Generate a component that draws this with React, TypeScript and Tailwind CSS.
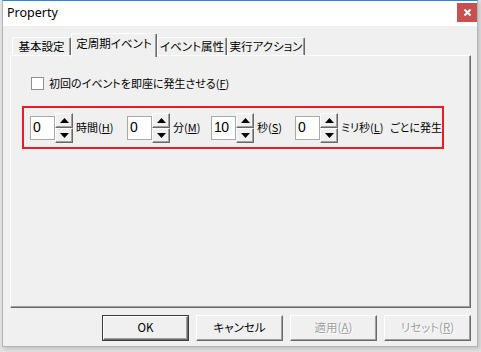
const jp = "font-['Noto_Sans_CJK_JP',sans-serif] [font-feature-settings:'palt']"

function Tri({ up }: { up?: boolean }) {
  return (
    <svg width="9" height="5" viewBox="0 0 9 5">
      <path d={up ? 'M4.5 0L9 5H0Z' : 'M0 0H9L4.5 5Z'} fill="#000" />
    </svg>
  )
}

function SpinBtn({ up }: { up?: boolean }) {
  return (
    <div className="h-[15px] w-[18px] flex items-center justify-center bg-[#f0f0f0] border border-t-white border-l-white border-r-[#696969] border-b-[#696969] shadow-[inset_-1px_-1px_0_#a0a0a0]">
      <Tri up={up} />
    </div>
  )
}

function Spin({ value }: { value: string }) {
  return (
    <div className="flex items-center shrink-0">
      <div className="w-[25px] h-[24px] bg-white border border-[#a9a9a9] pl-[2px] text-[14px] leading-[20px] tracking-[-0.5px] font-['Liberation_Sans',sans-serif] text-black">
        {value}
      </div>
      <div className="flex flex-col w-[18px] h-[30px]">
        <SpinBtn up />
        <SpinBtn />
      </div>
    </div>
  )
}

function Tab({ label, w, active }: { label: string; w: string; active?: boolean }) {
  return (
    <div
      className={
        active
          ? `${w} shrink-0 relative z-10 h-[24px] -mb-[2px] pb-[4px] flex items-center justify-center bg-[#f0f0f0] border-t border-l border-r border-t-white border-l-white border-r-[#696969] shadow-[inset_-1px_0_0_#a0a0a0] rounded-t-[2px]`
          : `${w} shrink-0 h-[18px] flex items-center justify-center bg-[#f0f0f0] border-t border-l border-r border-t-white border-l-white border-r-[#696969] shadow-[inset_-1px_0_0_#a0a0a0] rounded-t-[2px]`
      }
    >
      <span className="text-[11.5px] leading-none text-black whitespace-nowrap">{label}</span>
    </div>
  )
}

function Btn({ children, def, disabled }: { children: React.ReactNode; def?: boolean; disabled?: boolean }) {
  return (
    <div
      className={
        def
          ? 'w-[87px] h-[26px] border border-[#3c3c3c] flex'
          : 'w-[87px] h-[26px] flex'
      }
    >
      <div
        className={
          'flex-1 flex items-center justify-center whitespace-nowrap bg-[#f0f0f0] border border-t-white border-l-white border-r-[#696969] border-b-[#696969] shadow-[inset_-1px_-1px_0_#a0a0a0] text-[11.5px] ' +
          (disabled ? 'text-[#a0a0a0] [text-shadow:1px_1px_0_#fff]' : 'text-black')
        }
      >
        {children}
      </div>
    </div>
  )
}

export default function App() {
  return (
    <div className={`w-[481px] h-[352px] bg-[#e2e2e2] pl-[2px] ${jp}`}>
      <div className="w-[476px] h-[347px] flex flex-col border-t border-t-[#2b86d6] border-x border-b border-x-[#b4b4b4] border-b-[#b4b4b4] shadow-[2px_2px_4px_rgba(0,0,0,0.15)]">
        <div className="h-[25px] bg-white flex items-start justify-between">
          <span className="pl-[4px] pt-[5px] text-[12.5px] leading-[14px] text-black font-['Noto_Sans',sans-serif]">
            Property
          </span>
          <div className="mt-[2px] w-[20px] h-[19px] bg-[#c75050] flex items-center justify-center">
            <svg width="7" height="7" viewBox="0 0 7 7">
              <path d="M0.5 0.5L6.5 6.5M6.5 0.5L0.5 6.5" stroke="#fff" strokeWidth="2" />
            </svg>
          </div>
        </div>
        <div className="flex-1 bg-[#f0f0f0] pt-[7px] pl-[7px] flex flex-col">
          <div className="h-[22px] flex items-end pl-[2px]">
            <Tab label="基本設定" w="w-[59px]" />
            <Tab label="定周期イベント" w="w-[86px]" active />
            <Tab label="イベント属性" w="w-[70px]" />
            <Tab label="実行アクション" w="w-[78px]" />
          </div>
          <div className="w-[461px] h-[253px] bg-[#f0f0f0] border border-t-white border-l-white border-r-[#696969] border-b-[#696969] shadow-[inset_-1px_-1px_0_#a0a0a0] pl-[11px] pt-[19px] flex flex-col">
            <div className="h-[16px] flex items-center pl-[9px]">
              <div className="w-[13px] h-[13px] bg-white border border-[#8f8f8f]" />
              <span className="ml-[5px] text-[11px] text-black leading-none whitespace-nowrap">
                初回のイベントを即座に発生させる(<span className="underline">F</span>)
              </span>
            </div>
            <div className="mt-[15px] w-[422px] h-[43px] border-2 border-[#ec1c24] flex items-center pl-[6px] text-[11px] text-black whitespace-nowrap">
              <Spin value="0" />
              <span className="ml-[3px] w-[51px] shrink-0">
                時間(<span className="underline">H</span>)
              </span>
              <Spin value="0" />
              <span className="ml-[3px] w-[38px] shrink-0">
                分(<span className="underline">M</span>)
              </span>
              <Spin value="10" />
              <span className="ml-[3px] w-[38px] shrink-0">
                秒(<span className="underline">S</span>)
              </span>
              <Spin value="0" />
              <span className="ml-[3px] w-[49px] shrink-0">
                ミリ秒(<span className="underline">L</span>)
              </span>
              <span className="shrink-0">ごとに発生</span>
            </div>
          </div>
          <div className="mt-[7px] w-[461px] flex justify-end gap-[7px]">
            <Btn def>OK</Btn>
            <Btn>キャンセル</Btn>
            <Btn disabled>
              適用(<span className="underline">A</span>)
            </Btn>
            <Btn disabled>
              リセット(<span className="underline">R</span>)
            </Btn>
          </div>
        </div>
      </div>
    </div>
  )
}
